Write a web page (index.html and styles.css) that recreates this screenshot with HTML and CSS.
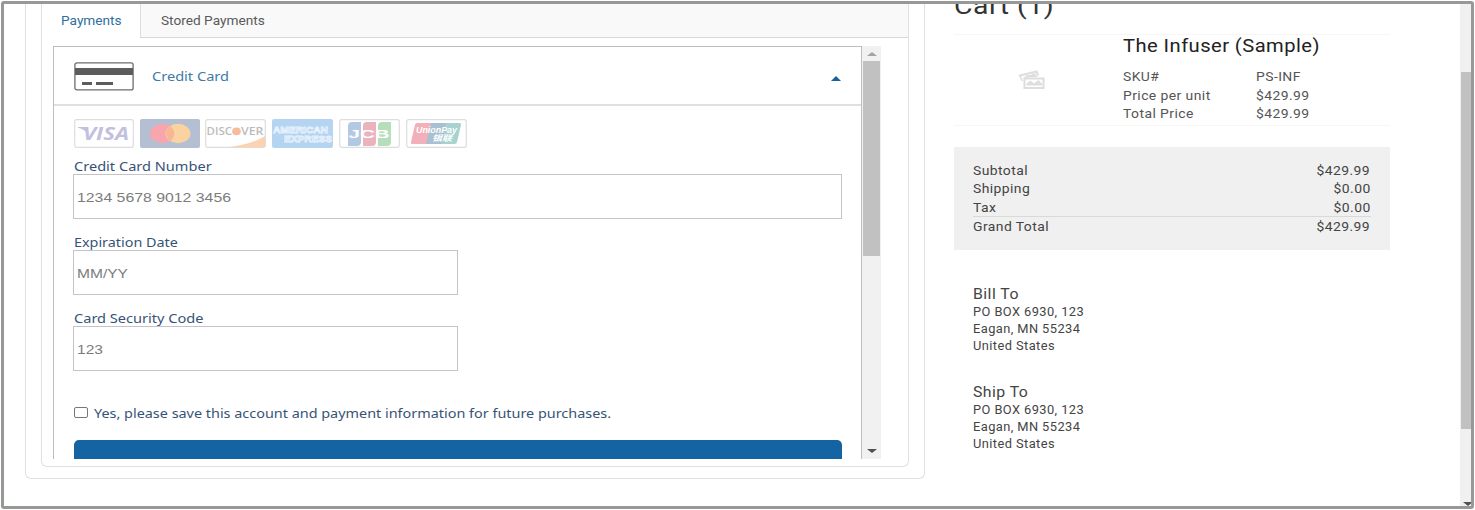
FILE: index.html
```html
<!DOCTYPE html>
<html lang="en">
<head>
<meta charset="utf-8">
<title>Checkout</title>
<link rel="stylesheet" href="styles.css">
</head>
<body>
<div class="window">
  <main class="page">
    <section class="panel">
      <div class="tabs-box">
        <nav class="tabs">
          <a class="tab active"><span class="t">Payments</span></a>
          <a class="tab"><span class="t">Stored Payments</span></a>
        </nav>
        <div class="pay-frame">
          <div class="pay">
            <header class="method">
              <svg class="card-icon" width="60" height="29" viewBox="0 0 60 29"><rect x=".9" y=".9" width="58.2" height="27" rx="2" fill="#fff" stroke="#6c6c6c" stroke-width="1.3"/><path d="M1 6h58v7H1z" fill="#5c5c5c"/><path d="M8 21.500h10M22 21.500h17" stroke="#5c5c5c" stroke-width="2.800"/></svg>
              <span class="t method-name">Credit Card</span>
              <i class="caret"></i>
            </header>
            <form class="form">
              <div class="brands">
                <svg width="60" height="29" viewBox="0 0 60 29"><rect x=".7" y=".7" width="58.600" height="27.600" rx="2" fill="#fff" stroke="#ddd" stroke-width="1.2"/><text x="9" y="20.500" textLength="46" lengthAdjust="spacingAndGlyphs" class="visa">VISA</text><path d="M4 8h7.500l2.500 7c-2.500-3-5-5-10-6.300z" fill="#c2c0de"/></svg>
                <svg width="60" height="29" viewBox="0 0 60 29"><rect width="60" height="29" rx="2" fill="#b4bfd3"/><ellipse cx="22.500" cy="14.500" rx="12.500" ry="9.700" fill="#f8a6ae"/><ellipse cx="38" cy="14.500" rx="12.500" ry="9.700" fill="#fbd3a0"/><path d="M30.200 7c5.400 4 5.400 11 0 15c-5.400-4-5.400-11 0-15z" fill="#f9b594"/></svg>
                <svg width="61" height="29" viewBox="0 0 61 29"><rect x=".7" y=".7" width="59.600" height="27.600" rx="2" fill="#fff" stroke="#ddd" stroke-width="1.2"/><path d="M23 28.300C39 26.500 51 22.500 60.300 17v9.500q0 1.800-2 1.800z" fill="#fbd3b3"/><text x="1.500" y="16" textLength="25.500" lengthAdjust="spacingAndGlyphs" class="disc">DISC</text><ellipse cx="31.500" cy="12.400" rx="4.300" ry="3.800" fill="#f7bb9d"/><text x="36" y="16" textLength="22.500" lengthAdjust="spacingAndGlyphs" class="disc">VER</text></svg>
                <svg width="61" height="29" viewBox="0 0 61 29"><rect width="61" height="29" rx="2" fill="#b5d4f2"/><text x="1" y="13.500" textLength="55" lengthAdjust="spacingAndGlyphs" class="amex">AMERICAN</text><text x="12" y="23" textLength="48" lengthAdjust="spacingAndGlyphs" class="amex">EXPRESS</text></svg>
                <svg width="61" height="29" viewBox="0 0 61 29"><rect x=".7" y=".7" width="59.600" height="27.600" rx="2" fill="#fff" stroke="#ddd" stroke-width="1.2"/><path d="M13 3h9v20q0 4-4 4H9V7q0-4 4-4z" fill="#b3c9e3"/><path d="M28 3h9v20q0 4-4 4h-9V7q0-4 4-4z" fill="#ebb3bd"/><path d="M43 3h9v20q0 4-4 4h-9V7q0-4 4-4z" fill="#b5dfba"/><text x="9.500" y="18.500" textLength="41" lengthAdjust="spacingAndGlyphs" class="jcb">JCB</text></svg>
                <svg width="61" height="29" viewBox="0 0 61 29"><rect x=".7" y=".7" width="59.600" height="27.600" rx="2" fill="#fff" stroke="#ddd" stroke-width="1.2"/><path d="M11 4h15l-5 21H7q-2.500 0-2-2L9 5.500Q9.500 4 11 4z" fill="#f2b0ba"/><path d="M25 4h16l-5 21H20z" fill="#a9bfd2"/><path d="M40 4h13q2.500 0 2 2l-4 17q-.5 2-2.500 2H35z" fill="#a6d2cf"/><text x="10" y="13.500" textLength="41" lengthAdjust="spacingAndGlyphs" class="up">UnionPay</text><text x="26" y="22" textLength="20" lengthAdjust="spacingAndGlyphs" class="upc">银联</text></svg>
              </div>
              <label class="field"><span class="t">Credit Card Number</span><span class="input wide"><span class="t number">1234 5678 9012 3456</span></span></label>
              <label class="field"><span class="t date">Expiration Date</span><span class="input"><span class="t">MM/YY</span></span></label>
              <label class="field"><span class="t">Card Security Code</span><span class="input"><span class="t">123</span></span></label>
              <label class="save"><i class="check"></i><span class="t save-text">Yes, please save this account and payment information for future purchases.</span></label>
              <div class="submit"></div>
            </form>
          </div>
          <div class="scroll"><i class="arrow-up"></i><i class="thumb"></i><i class="arrow-down"></i></div>
        </div>
      </div>
    </section>
    <aside class="cart">
      <h1><span class="t">Cart (1)</span></h1>
      <div class="item">
        <div class="photo"><svg width="27" height="20" viewBox="0 0 27 20"><path d="M1 5.800L18.500 1.500l1.500 4" fill="none" stroke="#dedede" stroke-width="2.200"/><path d="M1.500 5L4.500 11M8 7l2-1.500 2.500.5L16 4l2 2z" fill="#dedede" stroke="#dedede" stroke-width="1.600"/><path d="M6.500 8.500h19v9.500h-19z" fill="#fff" stroke="#dedede" stroke-width="2"/><path d="M8.500 15.500v-2l4-3 3.500 3 4.500-3.500 3.500 3.500v2z" fill="#dedede"/></svg></div>
        <div class="info">
          <h2><span class="t">The Infuser (Sample)</span></h2>
          <dl>
            <dt><span class="t">SKU#</span></dt><dd><span class="t">PS-INF</span></dd>
            <dt><span class="t">Price per unit</span></dt><dd><span class="t">$429.99</span></dd>
            <dt><span class="t">Total Price</span></dt><dd><span class="t">$429.99</span></dd>
          </dl>
        </div>
      </div>
      <div class="summary">
        <div class="row"><span class="t">Subtotal</span><span class="t r">$429.99</span></div>
        <div class="row"><span class="t">Shipping</span><span class="t r">$0.00</span></div>
        <div class="row"><span class="t">Tax</span><span class="t r">$0.00</span></div>
        <div class="row total"><span class="t">Grand Total</span><span class="t r">$429.99</span></div>
      </div>
      <address>
        <h3><span class="t">Bill To</span></h3>
        <p><span class="t">PO BOX 6930, 123</span></p>
        <p><span class="t">Eagan, MN 55234</span></p>
        <p><span class="t">United States</span></p>
      </address>
      <address>
        <h3><span class="t">Ship To</span></h3>
        <p><span class="t">PO BOX 6930, 123</span></p>
        <p><span class="t">Eagan, MN 55234</span></p>
        <p><span class="t">United States</span></p>
      </address>
    </aside>
    <div class="page-scroll"><i class="page-thumb"></i><i class="arrow-down"></i></div>
  </main>
</div>
</body>
</html>
```
FILE: styles.css
```css
* { box-sizing: border-box; }
body { margin: 0; padding: 1px; height: 510px; overflow: hidden; background: #fff; font-family: Roboto, "Liberation Sans", sans-serif; color: #444; }
h1, h2, h3, p, dl, dd { margin: 0; font-weight: 400; }

/* Wide-set text: every label is stretched horizontally */
.t { display: inline-block; white-space: nowrap; transform: scaleX(1.07); transform-origin: left center; }
.t.r { transform-origin: right center; margin-right: .5px; }
.tabs .t { transform: translateY(.5px) scaleX(1.085); }
.pay .t { transform: translateY(.6px) scaleX(1.157); }
.pay .method-name { transform: translateY(-.4px) scaleX(1.157); }
.pay .date { transform: translateY(.6px) scaleX(1.14); }
.pay .save-text { transform: translateY(.6px) scaleX(1.144); }
.input .t { transform: scaleX(1.17); }
.input .number { transform: scaleX(1.19); }
h1 .t { transform: scaleX(1.184); }
h2 .t { transform: scaleX(1.12); }
h3 .t { transform: scaleX(1.13); }

.window { height: 508px; width: 1473px; border: 3px solid #979997; border-radius: 3px; overflow: hidden; }
.page { display: flex; height: 502px; }

.panel { width: 900px; height: 475px; margin-left: 21px; flex: none; border: 1px solid #e0e0e0; border-top: 0; border-radius: 0 0 6px 6px; padding: 0 15px; }
.tabs-box { height: 463px; border: 1px solid #e0e0e0; border-top: 0; border-radius: 0 0 6px 6px; }
.tabs { display: flex; height: 34px; background: linear-gradient(#d9d9d9, #d9d9d9) bottom / 100% 1px no-repeat #f9f9f9; font-size: 12.6px; line-height: 32px; color: #5a5a5a; }
.tab { padding-left: 20px; }
.tab.active { width: 99px; background: #fff; color: #2f6f9f; border-right: 1px solid #ddd; padding-left: 19px; }

.pay-frame { display: flex; width: 828px; height: 413px; margin: 8px 0 0 11px; overflow: hidden; }
.pay { width: 809px; border: solid #bdbdbd; border-width: 1px 1px 0; color: #365377; font-family: "Noto Sans", "Open Sans", sans-serif; font-size: 12.6px; }
.method { display: flex; align-items: center; height: 59px; padding: 1px 20px 0 20px; border-bottom: 2px solid #e0e0e0; }
.method-name { margin-left: 18px; color: #3d7aa6; }
.caret { margin: 4px 0 0 auto; border: solid transparent; border-width: 0 5.5px 5.500px; border-bottom-color: #1b619c; }
.form { padding: 13px 19px 0 20px; }
.brands { display: flex; gap: 5.850px; height: 29px; margin-left: -.3px; }
.brands svg { flex: none; }
.visa { font: italic 700 18px "Open Sans", sans-serif; fill: #c2c0de; }
.disc { font: 600 10px "Open Sans", sans-serif; fill: #bcbcbc; }
.amex { font: 700 9.500px "Liberation Sans", sans-serif; fill: #b5d4f2; stroke: #e9f3fd; stroke-width: .8px; }
.jcb { font: 700 11px "Liberation Sans", sans-serif; fill: #fff; }
.up { font: italic 700 8.500px "Liberation Sans", sans-serif; fill: #fff; }
.upc { font: italic 700 8px "Noto Sans CJK SC", sans-serif; fill: #fff; }
.field { display: block; height: 76px; padding-top: 9px; line-height: 17px; }
.field > .t { display: block; width: max-content; margin-left: -.5px; }
.input { display: flex; align-items: center; width: 385px; height: 45px; margin-left: -1px; border: 1px solid #c4c4c4; padding: 1px 0 0 3px; font-family: "Liberation Sans", Arial, sans-serif; font-size: 13.3px; color: #7c7c7c; }
.pay .input .t { transform: scaleX(1.17); }
.pay .input .number { transform: scaleX(1.19); }
.input.wide { width: 769px; }
.save { display: flex; align-items: center; height: 18px; margin-top: 27px; }
.check { width: 14px; height: 11px; border: 1px solid #777; border-radius: 2px; margin-right: 6px; }
.submit { height: 60px; margin-top: 19px; background: #1463a3; border-radius: 5px; }

.scroll { width: 19px; background: #f1f1f1; display: flex; flex-direction: column; align-items: center; }
.arrow-up { border: solid transparent; border-width: 0 5px 4px; border-bottom-color: #a3a3a3; margin-top: 6px; }
.thumb { width: 17px; height: 195px; margin-top: 5px; background: #c1c1c1; }
.arrow-down { border: solid transparent; border-width: 4px 5px 0; border-top-color: #505050; margin: auto 0 6px; }

.cart { width: 436px; margin-left: 29px; flex: none; letter-spacing: .4px; }
h1 { font-size: 24px; line-height: 28px; margin-top: -12px; height: 42px; color: #333; }
.item { display: flex; height: 92px; border: solid #f6f6f6; border-width: 1px 0; }
.photo { width: 169px; padding: 35px 0 0 64px; }
h2 { font-size: 18px; line-height: 22px; color: #222; }
dl { display: grid; grid-template-columns: 133px 1fr; margin-top: 11px; font-size: 13px; line-height: 18.6px; color: #555; }
dl > *, .row { height: 18.6px; }
.summary { margin-top: 21px; height: 103px; padding: 14.500px 19px 0; background: #f0f0f0; font-size: 13px; line-height: 18.600px; }
.row { display: flex; justify-content: space-between; }
.total { margin-top: -1px; border-top: 1px solid #d8dada; line-height: 20px; }
address { font-style: normal; padding-left: 19px; height: 98px; font-size: 12px; line-height: 17.200px; }
.summary + address { margin-top: 35px; }
h3 { font-size: 14px; line-height: 18px; height: 19px; }
p { height: 17.200px; }

.page-scroll { display: flex; flex-direction: column; align-items: flex-end; width: 11px; margin-left: auto; padding-top: 68px; background: #f0f0f0; }
.page-thumb { width: 10px; height: 357px; background: #c1c1c1; }
.page-scroll .arrow-down { margin: auto -2px 0 0; }
```
